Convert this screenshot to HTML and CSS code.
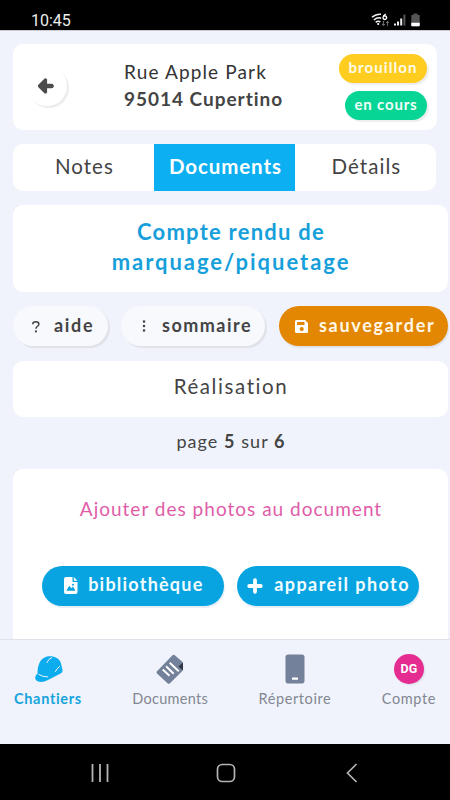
FILE: index.html
```html
<!DOCTYPE html>
<html lang="fr">
<head>
<meta charset="utf-8">
<meta name="viewport" content="width=device-width, initial-scale=1">
<title>Chantiers</title>
<link rel="stylesheet" href="styles.css">
</head>
<body>
<div class="phone">
  <div class="status">
    <span class="clock">10:45</span>
    <svg class="status-icons" width="52" height="16" viewBox="0 0 52 16" fill="none">
      <g stroke="#f2f2f2" stroke-width="1.5">
        <path d="M1 5.2Q5.5 1.6 10 2.3M2.8 8Q6.5 5 10.2 6.2M4.7 10.3Q7 8.5 9.3 10"/>
      </g>
      <circle cx="7.2" cy="12" r="1.1" fill="#fff"/>
      <path d="M14.8 2.2C12.8 3.2 12 4.4 12 5.7a1.8 1.8 0 1 0 .5-1.3" stroke="#fff" stroke-width="1.4"/>
      <path d="M12.4 9v4.4M10.9 12l1.5 1.6 1.5-1.6M16.6 13.8V9.2M15.1 10.9l1.5-1.6 1.5 1.6" stroke="#777" stroke-width="1"/>
      <path d="M23 11.6h2v2h-2zM26 9.5h2v4.1h-2zM29.2 6.5h2v7.1h-2z" fill="#eee"/>
      <path d="M32.4 2.6h2v11h-2z" fill="#555"/>
      <path d="M42.5 1.6h4v1.3h2.2v10.6a.8.8 0 0 1-.8.8h-6.800a.8.8 0 0 1-.8-.8V2.900h2.200z" fill="#555"/>
      <path d="M40.300 10.800h8.400v2.700a.8.8 0 0 1-.8.8h-6.800a.8.8 0 0 1-.8-.8z" fill="#fff"/>
    </svg>
  </div>

  <main class="content">
    <header class="card head">
      <button class="back" aria-label="Retour">
        <svg width="18" height="18" viewBox="0 0 18 18"><path d="M2.500 9 8.500 3V15z M5 9H15" fill="#4b4b4b" stroke="#4b4b4b" stroke-width="3.200" stroke-linecap="round" stroke-linejoin="round"/><path d="M9.500 9H14.500" stroke="#4b4b4b" stroke-width="4.400" stroke-linecap="round"/></svg>
      </button>
      <div class="address">
        <div class="street">Rue Apple Park</div>
        <div class="city">95014 Cupertino</div>
      </div>
      <div class="tags">
        <span class="tag draft">brouillon</span>
        <span class="tag ongoing">en cours</span>
      </div>
    </header>

    <nav class="tabs">
      <a class="tab">Notes</a>
      <a class="tab active">Documents</a>
      <a class="tab">Détails</a>
    </nav>

    <h1 class="card title"><span class="title-a">Compte rendu de</span><br><span class="title-b">marquage/piquetage</span></h1>

    <div class="actions">
      <button class="btn light help">
        <svg width="12" height="14" viewBox="0 0 12 14"><path d="M2.700 4.300C2.700 2.500 4 1.700 5.700 1.700S8.900 2.700 8.900 4.200C8.900 6.200 5.900 6.300 5.900 8.700" fill="none" stroke="#444" stroke-width="1.500"/><circle cx="5.900" cy="11.400" r="1.100" fill="#444"/></svg>
        <span>aide</span>
      </button>
      <button class="btn light summary">
        <svg width="4" height="14" viewBox="0 0 4 14" fill="#444"><circle cx="2" cy="2.500" r="1.250"/><circle cx="2" cy="7" r="1.250"/><circle cx="2" cy="11.500" r="1.250"/></svg>
        <span>sommaire</span>
      </button>
      <button class="btn save">
        <svg width="13" height="13" viewBox="0 0 13 13"><path fill="#fff" fill-rule="evenodd" d="M1.500 0H10l3 3v8.500a1.500 1.500 0 0 1-1.500 1.500h-10A1.500 1.500 0 0 1 0 11.500v-10A1.500 1.500 0 0 1 1.500 0zM2 2v3h7.500V2zM6.700 7a2.100 2.100 0 1 0 0 4.200 2.100 2.100 0 0 0 0-4.200z"/></svg>
        <span>sauvegarder</span>
      </button>
    </div>

    <h2 class="card section">Réalisation</h2>
    <p class="pager">page <b>5</b> sur <b>6</b></p>

    <section class="card photos">
      <p class="hint">Ajouter des photos au document</p>
      <div class="photo-actions">
        <button class="btn blue library">
          <svg width="14" height="17" viewBox="0 0 14 17"><path fill="#fff" d="M2 0h6.500v5H13.500v10a2 2 0 0 1-2 2H2a2 2 0 0 1-2-2V2a2 2 0 0 1 2-2zM9.800 0l3.700 3.700H9.800z"/><path fill="#08a4e2" d="M2.300 13.700 5.300 8.800 7.200 11.300 9 9.500l2.500 4.200z"/><circle cx="9" cy="7.700" r="1" fill="#08a4e2"/></svg>
          <span>bibliothèque</span>
        </button>
        <button class="btn blue camera">
          <svg width="16" height="16" viewBox="0 0 16 16"><path d="M8 2.200v11.600M2.200 8h11.600" stroke="#fff" stroke-width="3.800" stroke-linecap="round"/></svg>
          <span>appareil photo</span>
        </button>
      </div>
    </section>
  </main>

  <nav class="bottom">
    <a class="item current">
      <svg width="30" height="30" viewBox="0 0 30 30"><path fill="#0cacee" d="M4.600 19.500C4.300 12 7 4.200 14 2.600 20 1.300 26 3.800 27.700 8.500L29.200 14.500C30 17 29.500 18.500 27.500 19.500L15 26C9.500 29 4 28.300 2.600 25.500 1.700 23.500 2.500 21 4.600 19.500z"/><path fill="none" stroke="#f1f4fc" stroke-width="1" stroke-linecap="round" d="M5.800 20.500Q10 23 14.800 23M14 8.500Q15.500 4.500 18.700 3.600M22.400 17.500Q23.800 14.300 26.500 12.500"/></svg>
      <span>Chantiers</span>
    </a>
    <a class="item docs">
      <svg width="30" height="30" viewBox="0 0 30 30"><path fill="#74819a" d="M17.500 1.200Q18.700 .3 19.800 1.300L27.800 8.300V16.500L15 29.200Q13.700 30.300 12.500 29.200L2 19.500Q1 18.300 2 17.200z"/><path fill="#303846" d="M28 8.500V16.500L23.500 12.500z"/><path fill="none" stroke="#fff" stroke-width="1.900" d="M7.700 15.500 14.500 21.700M11 12.200 18.700 19.800M14.700 8.700 23.700 17.200"/></svg>
      <span>Documents</span>
    </a>
    <a class="item contacts">
      <svg width="30" height="30" viewBox="0 0 30 30"><rect x="5.500" y=".5" width="19" height="29" rx="2.800" fill="#74819a"/><rect x="12" y="23.500" width="6" height="2.200" rx=".5" fill="#fff"/></svg>
      <span>Répertoire</span>
    </a>
    <a class="item account">
      <i class="avatar">DG</i>
      <span>Compte</span>
    </a>
  </nav>

  <div class="sysnav">
    <svg width="20" height="20" viewBox="0 0 20 20"><path d="M2.500 1v18M10 1v18M17.500 1v18" stroke="#b4b4b4" stroke-width="1.800"/></svg>
    <svg width="20" height="20" viewBox="0 0 20 20"><rect x="1.500" y="1.500" width="17" height="17" rx="4.800" fill="none" stroke="#b4b4b4" stroke-width="1.700"/></svg>
    <svg width="20" height="20" viewBox="0 0 20 20"><path d="M14.500 1 5.500 10l9 9" fill="none" stroke="#b4b4b4" stroke-width="1.700"/></svg>
  </div>
</div>
</body>
</html>
```
FILE: styles.css
```css
* { box-sizing: border-box; }
body { margin: 0; background: #000; font-family: Lato, "Liberation Sans", sans-serif; color: #444; }
h1, h2, p { margin: 0; font-weight: 400; }
button { border: 0; padding: 0; font: inherit; color: inherit; background: none; }
svg { display: block; flex: none; }

.phone { display: flex; flex-direction: column; width: 450px; height: 800px; overflow: hidden; }

.status { display: flex; flex: none; height: 30px; padding: 12px 27px 0 31px; justify-content: space-between; }
.clock { font: 16px/18px Roboto, sans-serif; color: #eee; }
.status-icons { margin-right: 0; }

.content { flex: none; height: 609px; padding: 14px 2px 0 13px; overflow: hidden; background: #f0f3fb; border-top: 1px solid #c8cad0; }
.card { background: #fff; border-radius: 10px; }

.head { display: flex; width: 424px; height: 86px; margin-top: -1px; }
.back { display: flex; width: 40px; height: 40px; margin: 22px 0 0 14px; align-items: center; justify-content: center; border-radius: 50%; background: #fff; box-shadow: 2px 2px 1px #ececee; }
.back svg { margin-right: 3px; }
.address { width: 170px; margin: 15px 0 0 56px; font-size: 19px; line-height: 26.500px; white-space: nowrap; }
.street { padding-left: 1px; letter-spacing: 1.140px; color: #333; }
.city { padding-left: 1px; font-weight: 700; letter-spacing: .98px; }
.tags { display: flex; flex: 1; flex-direction: column; align-items: flex-end; margin: 9.500px 10px 0 0; gap: 8px; }
.tag { height: 29px; border-radius: 15px; font-size: 15px; font-weight: 700; line-height: 27px; color: #fffbe8; text-align: center; box-shadow: 2px 2px 1px #eeeef0; }
.draft { width: 88px; background: #fecd20; letter-spacing: 1.080px; }
.ongoing { width: 82px; background: #06d595; color: #effff8; letter-spacing: .8px; }

.tabs { display: grid; grid-template-columns: 141px 141px 141px; width: 423px; height: 47px; margin: 14px 0 0 .4px; border-radius: 10px; overflow: hidden; background: #fff; }
.tab { padding-left: 1px; font-size: 20.500px; line-height: 45px; letter-spacing: 1.050px; text-align: center; }
.active { background: #0caff2; color: #fff; font-weight: 700; letter-spacing: .9px; }

.title { height: 87px; margin-top: 14px; padding: 12px 0 0 1px; font-size: 22px; line-height: 30.300px; font-weight: 700; text-align: center; color: #169fda; }
.title-a { letter-spacing: 1.240px; }
.title-b { letter-spacing: 1.960px; }

.actions { display: flex; height: 40px; margin-top: 14px; gap: 13px; }
.btn { display: flex; height: 40px; align-items: center; border-radius: 20px; font-size: 18px; font-weight: 700; line-height: 36px; white-space: nowrap; }
.btn span { height: 39px; }
.light { background: #f7f9fd; box-shadow: 2px 2px 1px #e0e2e8; }
.help { width: 95px; padding-left: 17px; gap: 12px; letter-spacing: 1.690px; }
.help svg { margin-top: 2px; }
.summary { width: 144px; padding-left: 21px; gap: 16px; letter-spacing: 1.490px; }
.save { width: 169px; margin-left: 1px; padding-left: 16px; gap: 11px; color: #fff8e8; background: #e38703; box-shadow: 1px 2px 1px #dfe2ea; letter-spacing: 1.700px; }

.section { height: 56px; margin-top: 14.500px; padding-left: 1px; font-size: 20.500px; line-height: 51.500px; letter-spacing: 1.590px; text-align: center; }
.pager { height: 52.500px; padding-left: 1px; font-size: 18px; line-height: 48px; letter-spacing: 1.050px; text-align: center; }

.photos { height: 190px; }
.hint { padding: 26px 0 0 1px; font-size: 19px; line-height: 28px; letter-spacing: 1.010px; text-align: center; color: #df5ca8; }
.photo-actions { display: flex; margin: 42.500px 0 0 28.700px; gap: 13.500px; }
.blue { width: 182px; color: #f1fcff; background: #08a4e2; box-shadow: 1px 2px 1px #e6eef5; }
.library { padding-left: 22px; gap: 10.500px; letter-spacing: 1.220px; }
.camera { padding-left: 10px; gap: 11px; letter-spacing: 1.430px; }

.bottom { display: flex; flex: none; justify-content: space-between; height: 104.500px; padding: 14px 14px 0 14px; background: #f0f3fb; border-top: 1px solid #dfe2e8; }
.item { display: flex; flex-direction: column; align-items: center; font-size: 14.500px; line-height: 18px; color: #828791; }
.item span { margin-top: 6px; }
.current { color: #16a4dc; font-weight: 700; letter-spacing: .670px; }
.docs { letter-spacing: .300px; }
.contacts { letter-spacing: .590px; }
.account { letter-spacing: .620px; }
.avatar { width: 30px; height: 30px; border-radius: 50%; background: #e52c91; color: #fff; font: 700 12.500px/30px Roboto, sans-serif; letter-spacing: 0; text-align: center; box-shadow: 1px 1px 2px #d8dbe2; }

.sysnav { display: flex; flex: none; height: 56px; padding: 19px 88px 0 90px; justify-content: space-between; background: #000; }
```
